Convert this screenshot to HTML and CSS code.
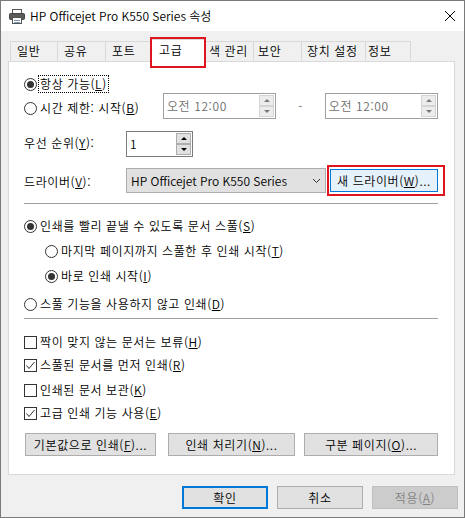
FILE: index.html
```html
<!DOCTYPE html>
<html lang="ko">
<head>
    <meta charset="UTF-8" />
    <title>HP Officejet Pro K550 Series 속성</title>
    <link rel="stylesheet" href="styles.css">
</head>
<body>
    <div class="window">
        <div class="titlebar">
            <svg class="app-icon" viewBox="0 0 16 16">
                <rect x="3.5" y="1.5" width="9" height="4" fill="#fff" stroke="#555" />
                <rect x="0.5" y="5.5" width="15" height="6" rx="1" fill="#5b5b5b" stroke="#444" />
                <rect x="3.5" y="9.5" width="9" height="6" fill="#fff" stroke="#555" />
                <path d="M5 12.5h6M5 14.5h6" stroke="#7d95b8" />
            </svg>
            <span class="title latin">HP Officejet Pro K550 Series 속성</span>
            <svg class="close" viewBox="0 0 10 10">
                <path d="M0 0L10 10M10 0L0 10" stroke="#000" stroke-width="1" />
            </svg>
        </div>

        <div class="client">
            <div class="tabs">
                <div class="tab tab-general">일반</div>
                <div class="tab tab-sharing">공유</div>
                <div class="tab tab-ports">포트</div>
                <div class="tab tab-advanced selected highlight">고급</div>
                <div class="tab tab-color">색 관리</div>
                <div class="tab tab-security">보안</div>
                <div class="tab tab-device">장치 설정</div>
                <div class="tab tab-about">정보</div>
            </div>

            <div class="panel">
                <div class="row row-always">
                    <span class="option">
                        <span class="radio checked"></span>
                        <span class="focus">항상 가능(<u>L</u>)</span>
                    </span>
                </div>

                <div class="row row-time">
                    <span class="option option-time">
                        <span class="radio"></span>
                        시간 제한: 시작(<u>B</u>)
                    </span>
                    <div class="spin spin-time disabled">
                        <span class="spin-value">오전 12:00</span>
                        <span class="spin-buttons"><span class="spin-up"></span><span class="spin-down"></span></span>
                    </div>
                    <span class="dash">-</span>
                    <div class="spin spin-time disabled">
                        <span class="spin-value">오전 12:00</span>
                        <span class="spin-buttons"><span class="spin-up"></span><span class="spin-down"></span></span>
                    </div>
                </div>

                <div class="row row-priority">
                    <span class="label">우선 순위(<u>Y</u>):</span>
                    <div class="spin spin-priority">
                        <span class="spin-value">1</span>
                        <span class="spin-buttons"><span class="spin-up"></span><span class="spin-down"></span></span>
                    </div>
                </div>

                <div class="row row-driver">
                    <span class="label">드라이버(<u>V</u>):</span>
                    <div class="select">
                        <span class="latin">HP Officejet Pro K550 Series</span>
                        <svg class="chevron" viewBox="0 0 7 4">
                            <polyline points="0,0 3.5,3.5 7,0" fill="none" stroke="#333" stroke-width="1" />
                        </svg>
                    </div>
                    <button class="btn btn-hot highlight highlight-driver">새 드라이버(<u>W</u>)...</button>
                </div>

                <div class="separator sep-first"></div>

                <div class="row row-spool">
                    <span class="option"><span class="radio checked"></span>인쇄를 빨리 끝낼 수 있도록 문서 스풀(<u>S</u>)</span>
                </div>
                <div class="row row-last-page indent">
                    <span class="option"><span class="radio"></span>마지막 페이지까지 스풀한 후 인쇄 시작(<u>T</u>)</span>
                </div>
                <div class="row row-immediately indent">
                    <span class="option"><span class="radio checked"></span>바로 인쇄 시작(<u>I</u>)</span>
                </div>
                <div class="row row-direct">
                    <span class="option"><span class="radio"></span>스풀 기능을 사용하지 않고 인쇄(<u>D</u>)</span>
                </div>

                <div class="separator sep-second"></div>

                <div class="row row-hold">
                    <span class="option"><span class="check"></span>짝이 맞지 않는 문서는 보류(<u>H</u>)</span>
                </div>
                <div class="row row-spooled-first">
                    <span class="option"><span class="check checked"><svg viewBox="0 0 11 11"><polyline points="1.5,5.5 4,8.5 9.5,2" fill="none" stroke="#333" stroke-width="1" /></svg></span>스풀된 문서를 먼저 인쇄(<u>R</u>)</span>
                </div>
                <div class="row row-keep">
                    <span class="option"><span class="check"></span>인쇄된 문서 보관(<u>K</u>)</span>
                </div>
                <div class="row row-advanced">
                    <span class="option"><span class="check checked"><svg viewBox="0 0 11 11"><polyline points="1.5,5.5 4,8.5 9.5,2" fill="none" stroke="#333" stroke-width="1" /></svg></span>고급 인쇄 기능 사용(<u>E</u>)</span>
                </div>

                <div class="panel-buttons">
                    <button class="btn btn-defaults">기본값으로 인쇄(<u>F</u>)...</button>
                    <button class="btn btn-processor">인쇄 처리기(<u>N</u>)...</button>
                    <button class="btn btn-separator">구분 페이지(<u>O</u>)...</button>
                </div>
            </div>

            <div class="dialog-buttons">
                <button class="btn btn-dialog btn-default">확인</button>
                <button class="btn btn-dialog">취소</button>
                <button class="btn btn-dialog" disabled>적용(<u>A</u>)</button>
            </div>
        </div>
    </div>
</body>
</html>
```

FILE: styles.css
```css
* {
    box-sizing: border-box;
}
body {
    margin: 0;
    font-family: "Noto Sans CJK KR", sans-serif;
    font-size: 12px;
    font-weight: 350;
    line-height: 16px;
    letter-spacing: 0.6px;
    color: #000;
    background: #fff;
}
.latin {
    letter-spacing: 0;
}
u {
    text-decoration: underline;
    text-underline-offset: 1px;
}
.window {
    width: 465px;
    height: 518px;
    border: 1px solid #7a7a7a;
    display: flex;
    flex-direction: column;
    background: #f0f0f0;
}

/* title bar */
.titlebar {
    height: 30px;
    background: #fff;
    display: flex;
    align-items: center;
    padding-left: 8px;
}
.app-icon {
    width: 16px;
    height: 16px;
}
.title {
    margin-left: 5px;
}
.close {
    margin-left: auto;
    margin-right: 9px;
    width: 10px;
    height: 10px;
}

/* tabs */
.tabs {
    display: flex;
    align-items: flex-end;
    height: 30px;
    padding: 8px 0 0 9px;
}
.tab {
    height: 20px;
    border: 1px solid #d9d9d9;
    border-bottom: none;
    margin-left: -1px;
    padding-left: 6px;
    line-height: 18px;
    white-space: nowrap;
}
.tab:first-child {
    margin-left: 0;
}
.tab-general { width: 48px; }
.tab-sharing { width: 49px; }
.tab-ports { width: 46px; }
.tab-advanced { width: 56px; }
.tab-color { width: 49px; padding-left: 3px; }
.tab-security { width: 49px; padding-left: 4px; }
.tab-device { width: 65px; padding-left: 5px; }
.tab-about { width: 46px; padding-left: 2px; }
.tab.selected {
    height: 23px;
    margin-bottom: -1px;
    background: #fff;
    padding-left: 8px;
    line-height: 20px;
    position: relative;
    z-index: 1;
}

/* red marks drawn over the screenshot */
.highlight {
    position: relative;
}
.highlight::after {
    content: "";
    position: absolute;
    top: -3px;
    left: -1px;
    right: -1px;
    bottom: -6px;
    border: 2px solid #e0141e;
    pointer-events: none;
}
.highlight-driver::after {
    top: -5px;
    left: -4px;
    right: -8px;
    bottom: -5px;
}

/* panel */
.panel {
    margin-left: 7px;
    width: 447px;
    height: 414px;
    background: #fff;
    border: 1px solid #d9d9d9;
    padding: 13px 16px 0 15px;
    display: flex;
    flex-direction: column;
}
.row {
    display: flex;
    align-items: center;
    height: 18px;
    white-space: nowrap;
}
.indent {
    padding-left: 21px;
}
.option {
    display: flex;
    align-items: center;
}
.radio {
    width: 13px;
    height: 13px;
    border: 1px solid #333;
    border-radius: 50%;
    margin-right: 3px;
    display: flex;
    align-items: center;
    justify-content: center;
    background: #fff;
}
.radio.checked::after {
    content: "";
    width: 7px;
    height: 7px;
    border-radius: 50%;
    background: #333;
}
.check {
    width: 13px;
    height: 13px;
    border: 1px solid #333;
    margin-right: 3px;
    background: #fff;
    display: flex;
}
.check svg {
    width: 11px;
    height: 11px;
}
.focus {
    outline: 1px dotted #000;
    outline-offset: 0;
    padding: 0 1px;
    margin-left: -1px;
}

.row-time {
    height: 26px;
}
.option-time {
    width: 140px;
    margin-top: 4px;
}
.dash {
    width: 49px;
    text-align: center;
    color: #6d6d6d;
}
.row-priority {
    height: 26px;
    margin-top: 12px;
}
.row-priority .label {
    margin-bottom: 3px;
}
.label {
    width: 102px;
}
.row-driver {
    height: 25px;
    margin-top: 11px;
}
.row-driver .label {
    margin-top: 2px;
}

/* spin boxes */
.spin {
    display: flex;
    height: 26px;
    border: 1px solid #7a7a7a;
    background: #fff;
    padding: 1px 1px 1px 0;
}
.spin-time {
    width: 114px;
}
.spin-priority {
    width: 67px;
}
.spin-value {
    flex: 1;
    padding-left: 3px;
    line-height: 22px;
}
.spin-buttons {
    display: flex;
    flex-direction: column;
    width: 15px;
}
.spin-up,
.spin-down {
    flex: 1;
    background: #e1e1e1;
    border: 1px solid #adadad;
    display: flex;
    align-items: center;
    justify-content: center;
}
.spin-up::after,
.spin-down::after {
    content: "";
    border-left: 3px solid transparent;
    border-right: 3px solid transparent;
}
.spin-up::after {
    border-bottom: 3px solid #000;
}
.spin-down::after {
    border-top: 3px solid #000;
}
.spin.disabled {
    border-color: #a0a0a0;
    color: #6d6d6d;
}
.spin.disabled .spin-up,
.spin.disabled .spin-down {
    background: #ececec;
    border-color: #d4d4d4;
}
.spin.disabled .spin-up::after {
    border-bottom-color: #7a7a7a;
}
.spin.disabled .spin-down::after {
    border-top-color: #7a7a7a;
}

/* combo box */
.select {
    width: 200px;
    height: 25px;
    background: #e1e1e1;
    border: 1px solid #adadad;
    display: flex;
    align-items: center;
    padding: 0 5px 0 4px;
}
.chevron {
    margin-left: auto;
    width: 7px;
    height: 4px;
}

/* buttons */
.btn {
    font-family: inherit;
    font-size: 12px;
    font-weight: inherit;
    letter-spacing: inherit;
    line-height: 16px;
    color: #000;
    height: 23px;
    background: #e1e1e1;
    border: 1px solid #adadad;
    padding: 0;
    display: flex;
    align-items: center;
    justify-content: center;
    white-space: nowrap;
}
.btn-hot {
    width: 108px;
    height: 23px;
    margin-left: 4px;
    background: #e5f1fb;
    border-color: #0078d7;
}
.btn-default {
    border: 2px solid #0078d7;
}
.btn:disabled {
    background: #cccccc;
    border-color: #bfbfbf;
    color: #838383;
}

.separator {
    height: 1px;
    background: #a0a0a0;
}
.sep-first { margin-top: 10px; }
.row-spool { margin-top: 13px; }
.row-last-page { margin-top: 7px; }
.row-immediately { margin-top: 7px; }
.row-direct { margin-top: 10px; }
.sep-second { margin-top: 5px; }
.row-hold { margin-top: 14px; }
.row-spooled-first { margin-top: 5px; }
.row-keep { margin-top: 7px; }
.row-advanced { margin-top: 5px; }

.panel-buttons {
    display: flex;
    margin-top: 11px;
    padding-left: 1px;
}
.btn-defaults { width: 132px; }
.btn-processor { width: 128px; margin-left: 12px; }
.btn-separator { width: 135px; margin-left: 9px; }

.dialog-buttons {
    display: flex;
    justify-content: flex-end;
    gap: 9px;
    margin-top: 11px;
    padding-right: 6px;
}
.btn-dialog {
    width: 86px;
}
```
